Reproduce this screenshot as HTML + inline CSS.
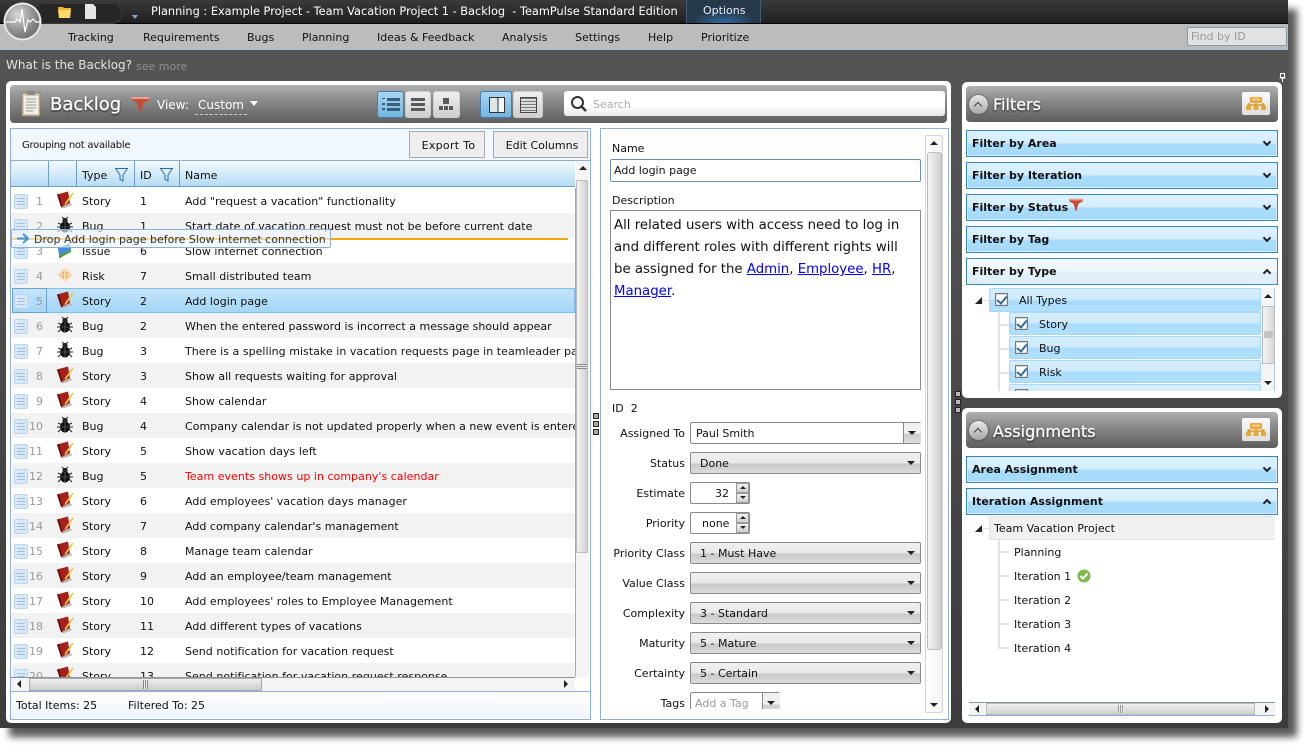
<!DOCTYPE html>
<html><head><meta charset="utf-8"><style>
html,body{margin:0;padding:0;background:#fff;width:1304px;height:745px;overflow:hidden}
body{font:11px "DejaVu Sans",sans-serif;color:#111;position:relative}
.a,.r>*{position:absolute}
.t{white-space:pre;line-height:14px;margin-top:1px}
.r{position:absolute;left:0;width:563px;height:25px;line-height:27px;white-space:pre}
.r:nth-child(even){background:#f2f2f2}
.r .h{left:2px;top:6px;width:12px;height:13px;background:#d8e8f7;border:1px solid #bcd5ec;border-radius:2px;line-height:0}
.r .h:before{content:"";position:absolute;left:2px;top:3px;width:8px;height:1px;background:#9dbfe0;box-shadow:0 3px 0 #9dbfe0,0 6px 0 #9dbfe0}
.r .n{right:532px;color:#999;font-size:11px}
.r svg{left:44px;top:3px}
.r .k{left:70px}.r .i{left:128px}.r .m{left:173px;letter-spacing:.03px}
.ac{position:absolute;left:966px;border:1px solid #3a86b8;padding:0 0 0 5px;width:305px;height:25px;line-height:26px;font-weight:bold;font-size:11px;background:linear-gradient(#daf0fe 0,#d4edfd 48%,#a9dcfb 52%,#a6dafa 100%);box-shadow:inset 0 0 0 1px #d6eefc}
.ac i{position:absolute;right:7px;top:8px;width:4px;height:4px;border:solid #222;border-width:0 2px 2px 0;transform:rotate(45deg)}
.ac i.u{top:11px;transform:rotate(225deg)}
.lb{position:absolute;right:619px;white-space:pre;line-height:14px;margin-top:1px}
.dd{position:absolute;left:690px;width:229px;height:20px;border:1px solid #8a8a8a;border-radius:2px;line-height:20px;background:linear-gradient(#f0f0f0 0,#e8e8e8 50%,#c9c9c9 55%,#dcdcdc 100%)}
.dd span{position:absolute;left:9px;top:1px;white-space:pre}
.dd:after,.ar:after{content:"";position:absolute;right:5px;top:8px;border:solid transparent;border-width:4px 4px 0;border-top-color:#222}
.in{position:absolute;background:#fff;border:1px solid #8a8a8a;border-radius:2px;box-sizing:border-box}
.sp{position:absolute;width:13px;height:10px;background:linear-gradient(#f2f2f2,#cfcfcf);border:1px solid #9a9a9a;box-sizing:border-box}
.sp:after{content:"";position:absolute;left:3px;top:2px;border:solid transparent;border-width:0 3px 3px;border-bottom-color:#222}
.sp.d:after{border-width:3px 3px 0;border-bottom-color:transparent;border-top-color:#222}
.hd{position:absolute;background:linear-gradient(#b0b0b0 0,#8a8a8a 40%,#5e5e5e 100%);border-radius:4px}
.ttl{position:absolute;color:#fff;text-shadow:0 0 1px #fff,0 1px 2px #000;white-space:pre;margin-top:1px}
.cb{position:absolute;width:11px;height:11px;border:1px solid #777;background:#fff;box-shadow:inset 0 0 0 1px #ddd;line-height:0}
.cb:after{content:"";position:absolute;left:3px;top:0;width:4px;height:8px;border:solid #2b6a9e;border-width:0 2px 2px 0;transform:rotate(40deg)}
.ti{position:absolute;height:23px;background:linear-gradient(#d6eefc 0,#cfeafc 45%,#a9dcfb 55%,#b2e0fb 100%);border:1px solid #a4daf8;box-sizing:border-box;border-radius:2px}
.tl{position:absolute;background:#e2e2e2}
.btn{position:absolute;top:91px;height:27px;box-sizing:border-box;border:1px solid #ccc;border-radius:3px;background:linear-gradient(#f0f0f0,#cfcfcf)}
.btn.on{background:linear-gradient(#a8d5f2,#73b5e0);border-color:#3f7fae}
.bar{position:absolute;background:#5a5a5a}
.grip{position:absolute;width:6px;height:6px;box-sizing:border-box;border:1px solid #222;background:#aaa}
.tb{position:absolute;top:131px;height:27px;box-sizing:border-box;border:1px solid #aaa;background:#eee;line-height:27px;text-align:center}
.chev{position:absolute;width:19px;height:19px;border-radius:50%;background:linear-gradient(#e8e8e8,#a8a8a8);box-shadow:0 0 2px #333}
.chev:after{content:"";position:absolute;left:6px;top:8px;width:5px;height:5px;border:solid #444;border-width:1px 0 0 1px;transform:rotate(45deg)}
.org{position:absolute;width:28px;height:23px;background:linear-gradient(#fafafa,#dedede);border-radius:2px;box-shadow:0 0 1px #999}
</style></head><body>
<svg width="0" height="0" style="position:absolute"><defs>
<symbol id="story" viewBox="0 0 18 18"><path d="M5 15.500l9-3.500 2.500 2-9.500 3.500z" fill="#b9b9b9"/><path d="M1 3.500L12 .5l2 11.500-9 4z" fill="#a8201c"/><path d="M1 3.500l4 12.500 1.500.5L3 3z" fill="#5e100e"/><path d="M16.500 1.500l1 1L10.500 13l-1.800 1 .2-2z" fill="#f0c23a"/></symbol>
<symbol id="bug" viewBox="0 0 18 18"><ellipse cx="9" cy="11" rx="5" ry="5.500" fill="#111"/><circle cx="9" cy="4.500" r="2.600" fill="#222"/><path d="M2 7l4 2M16 7l-4 2M1 11h4M17 11h-4M2 16l3-3M16 16l-3-3M6 1l2 2M12 1l-2 2" stroke="#222" stroke-width="1" fill="none"/><path d="M9 6v10M5 11h8" stroke="#777" stroke-width=".6"/></symbol>
<symbol id="risk" viewBox="0 0 18 18"><path d="M9 1l8 8-8 8-8-8z" fill="#f8e2c4"/><path d="M9 3.500l5.500 5.500L9 14.500 3.500 9z" fill="#e8b268"/><path d="M8.500 4v10h1V4z" fill="#fff"/><path d="M4.500 9l2.500-2v4zM13.500 9L11 7v4z" fill="#f8e2c4"/></symbol>
<symbol id="issue" viewBox="0 0 18 18"><path d="M2 7l12-5 1 7-12 5z" fill="#3f8fe0"/><path d="M3 14l12-5 0 2-11 6z" fill="#5b9a3c"/><path d="M3 14l1 3-1 0z" fill="#b5231f"/></symbol>
</defs></svg>

<!-- window -->
<div class="a" style="left:0;top:0;width:1288px;height:728px;background:linear-gradient(#565656 0,#505050 30%,#3c3c3c 100%);box-shadow:9px 9px 7px rgba(0,0,0,.65)"></div>
<div class="a" style="left:0;top:0;width:1288px;height:23px;background:linear-gradient(#3a3a3a,#1f1f1f)"></div>
<div class="a" style="left:0;top:23px;width:1288px;height:1px;background:#000"></div>
<div class="a" style="left:0;top:24px;width:1288px;height:25px;background:#bcbcbc"></div>
<div class="a" style="left:0;top:49px;width:1288px;height:1px;background:#9cc0e8"></div>

<div class="a" style="left:34px;top:3px;width:86px;height:19px;border:1px solid #3a3a3a;border-radius:10px;background:#262626"></div>
<svg class="a" style="left:3px;top:2px" width="40" height="40" viewBox="0 0 40 40"><defs><radialGradient id="lg" cx=".35" cy=".3" r=".8"><stop offset="0" stop-color="#d8d8d8"/><stop offset=".6" stop-color="#8f8f8f"/><stop offset="1" stop-color="#6a6a6a"/></radialGradient></defs><circle cx="19.500" cy="19.500" r="19" fill="#e8e8e8"/><circle cx="19.500" cy="19.500" r="17" fill="url(#lg)"/><path d="M3 20h9l2-3 3 3 2-13 3 23 3-12 2 2 3-3 3 3h5" stroke="#fff" stroke-width="1.200" fill="none"/></svg>
<svg class="a" style="left:57px;top:4px" width="15" height="15" viewBox="0 0 15 15"><path d="M1 3h5l1 1h7l-1 10H2z" fill="#f1b72f"/><path d="M1 6h13l-1 8H2z" fill="#fbd869"/></svg>
<svg class="a" style="left:85px;top:4px" width="12" height="15" viewBox="0 0 12 15"><path d="M0 0h8l3 3v12H0z" fill="#e6e6e6"/></svg>
<svg class="a" style="left:132px;top:15px" width="6" height="4" viewBox="0 0 6 4"><path d="M0 0h6L3 4z" fill="#8aa4d8"/></svg>

<div class="a t" style="left:151px;top:3px;color:#fff;font-size:11.33px">Planning : Example Project - Team Vacation Project 1 - Backlog  - TeamPulse Standard Edition</div>
<div class="a" style="left:686px;top:0;width:75px;height:23px;box-sizing:border-box;border:solid #3f5f7a;border-width:0 1px;background:radial-gradient(ellipse 40px 16px at 50% 100%,#2f6a9e,#25394b 80%)"></div>
<div class="a t" style="left:703px;top:3px;color:#e8eef4">Options</div>

<div class="a t" style="left:68px;top:30px">Tracking</div>
<div class="a t" style="left:143px;top:30px">Requirements</div>
<div class="a t" style="left:247px;top:30px">Bugs</div>
<div class="a t" style="left:302px;top:30px">Planning</div>
<div class="a t" style="left:377px;top:30px">Ideas &amp; Feedback</div>
<div class="a t" style="left:502px;top:30px">Analysis</div>
<div class="a t" style="left:575px;top:30px">Settings</div>
<div class="a t" style="left:648px;top:30px">Help</div>
<div class="a t" style="left:701px;top:30px">Prioritize</div>
<div class="a" style="left:1187px;top:27px;width:98px;height:17px;border:1px solid #8c9aa8;border-radius:2px;background:#e2e2e2"></div>
<div class="a t" style="left:1191px;top:29px;color:#9a9a9a;font-size:11px">Find by ID</div>

<div class="a t" style="left:6px;top:57px;font-size:12px;color:#e4e4e4">What is the Backlog?</div>
<div class="a t" style="left:136px;top:59px;color:#8f8f8f">see more</div>

<!-- backlog panel -->
<div class="a" style="left:6px;top:81px;width:945px;height:642px;background:#fff;border-radius:5px"></div>
<div class="hd" style="left:10px;top:85px;width:937px;height:38px"></div>
<svg class="a" style="left:21px;top:90px" width="20" height="27" viewBox="0 0 20 27"><rect x="1" y="3" width="18" height="23" rx="1" fill="#d8cdb8" stroke="#8a7f6a"/><rect x="3" y="6" width="14" height="18" fill="#efefe8"/><rect x="6" y="1" width="8" height="4" fill="#888"/><path d="M5 9h10M5 12h10M5 15h10M5 18h10M5 21h7" stroke="#999"/></svg>
<div class="ttl" style="left:50px;top:92px;font-size:18px;line-height:24px">Backlog</div>
<svg class="a" style="left:132px;top:96px" width="17" height="16" viewBox="0 0 17 16"><path d="M0 1h17v3l-5.500 3L9 16 8 16 5.500 7 0 4z" fill="#c94a35"/><path d="M0 1h17v2H0z" fill="#e8a090"/></svg>
<div class="a t" style="left:157px;top:97px;font-size:12px;color:#fff">View:</div>
<div class="a t" style="left:198px;top:97px;font-size:12px;color:#fff">Custom</div>
<div class="a" style="left:195px;top:114px;width:52px;border-top:1px dashed #ccc"></div>
<div class="a" style="left:250px;top:101px;border:solid transparent;border-width:5px 4px 0;border-top-color:#fff"></div>

<div class="btn on" style="left:377px;width:27px"></div>
<div class="btn" style="left:405px;width:26px"></div>
<div class="btn" style="left:433px;width:27px"></div>
<div class="btn on" style="left:480px;width:32px"></div>
<div class="btn" style="left:513px;width:30px"></div>
<div class="bar" style="left:387px;top:98px;width:13px;height:3px;background:#3a5f7a"></div><div class="bar" style="left:387px;top:103px;width:13px;height:3px;background:#3a5f7a"></div><div class="bar" style="left:387px;top:108px;width:13px;height:3px;background:#3a5f7a"></div>
<div class="bar" style="left:382px;top:98px;width:3px;height:1px;background:#3a5f7a"></div><div class="bar" style="left:382px;top:103px;width:3px;height:2px;background:#3a5f7a"></div><div class="bar" style="left:382px;top:108px;width:3px;height:2px;background:#3a5f7a"></div>
<div class="bar" style="left:411px;top:98px;width:14px;height:3px"></div><div class="bar" style="left:411px;top:103px;width:14px;height:3px"></div><div class="bar" style="left:411px;top:108px;width:14px;height:3px"></div>
<div class="bar" style="left:443px;top:98px;width:6px;height:6px"></div><div class="bar" style="left:439px;top:106px;width:4px;height:4px"></div><div class="bar" style="left:444px;top:106px;width:4px;height:4px"></div><div class="bar" style="left:449px;top:106px;width:4px;height:4px"></div>
<div class="a" style="left:489px;top:97px;width:14px;height:14px;border:1px solid #333;background:linear-gradient(90deg,#dfe6ea 55%,#333 55%,#333 60%,#f4f8fb 60%)"></div>
<div class="a" style="left:520px;top:97px;width:15px;height:14px;border:1px solid #444;background:repeating-linear-gradient(#777 0,#777 1px,#ddd 1px,#ddd 3px)"></div>

<div class="a" style="left:564px;top:91px;width:381px;height:25px;border-radius:3px;background:linear-gradient(#fff 60%,#e9e9e9)"></div>
<svg class="a" style="left:570px;top:95px" width="18" height="18" viewBox="0 0 18 18"><circle cx="7.500" cy="7.500" r="5.500" stroke="#333" stroke-width="2" fill="none"/><path d="M11.500 11.500L16 16" stroke="#333" stroke-width="2.500"/></svg>
<div class="a t" style="left:593px;top:97px;color:#aaa">Search</div>

<!-- grid -->
<div class="a" style="left:10px;top:128px;width:579px;height:590px;border:1px solid #8eb0d6;background:#fff"></div>
<div class="a" style="left:11px;top:129px;width:579px;height:31px;background:#f0f7fe"></div>
<div class="a" style="left:11px;top:160px;width:579px;height:1px;background:#8eb0d6"></div>
<div class="a t" style="left:22px;top:138px;font-size:10px;letter-spacing:-.25px">Grouping not available</div>
<div class="tb" style="left:409px;width:76px;letter-spacing:.3px;padding-left:3px">Export To</div>
<div class="tb" style="left:493px;width:95px;padding-left:3px">Edit Columns</div>

<div class="a" style="left:11px;top:161px;width:564px;height:26px;background:linear-gradient(#f2f9fe,#d4ebfa 50%,#b5dcf6);border-bottom:1px solid #6f9fc8;box-sizing:border-box"></div>
<div class="a" style="left:48px;top:161px;width:1px;height:26px;background:#6f9fc8"></div>
<div class="a" style="left:76px;top:161px;width:1px;height:26px;background:#6f9fc8"></div>
<div class="a" style="left:134px;top:161px;width:1px;height:26px;background:#6f9fc8"></div>
<div class="a" style="left:179px;top:161px;width:1px;height:26px;background:#6f9fc8"></div>
<div class="a t" style="left:82px;top:168px">Type</div>
<div class="a t" style="left:140px;top:168px">ID</div>
<div class="a t" style="left:185px;top:168px">Name</div>
<svg class="a" style="left:115px;top:168px" width="13" height="14" viewBox="0 0 13 14"><path d="M.5.500h12L8 7v6l-3-1.500V7z" fill="none" stroke="#2f6d99"/></svg>
<svg class="a" style="left:160px;top:168px" width="13" height="14" viewBox="0 0 13 14"><path d="M.5.500h12L8 7v6l-3-1.500V7z" fill="none" stroke="#2f6d99"/></svg>

<div class="a" style="left:12px;top:188px;width:563px;height:489px;overflow:hidden;border-right:1px solid #8eb0d6">
<div class="r" style="top:0"><b class="h"></b><span class="n">1</span><svg width="18" height="18"><use href="#story"/></svg><span class="k">Story</span><span class="i">1</span><span class="m">Add "request a vacation" functionality</span></div>
<div class="r" style="top:25px"><b class="h"></b><span class="n">2</span><svg width="18" height="18"><use href="#bug"/></svg><span class="k">Bug</span><span class="i">1</span><span class="m">Start date of vacation request must not be before current date</span></div>
<div class="r" style="top:50px"><b class="h"></b><span class="n">3</span><svg width="18" height="18"><use href="#issue"/></svg><span class="k">Issue</span><span class="i">6</span><span class="m">Slow internet connection</span></div>
<div class="r" style="top:75px"><b class="h"></b><span class="n">4</span><svg width="18" height="18"><use href="#risk"/></svg><span class="k">Risk</span><span class="i">7</span><span class="m">Small distributed team</span></div>
<div class="r" style="top:100px;background:linear-gradient(#c5e6fb,#b4ddf8 50%,#a3d6f6);box-shadow:inset 0 0 0 1px #7fc0ea"><b class="h"></b><span class="n">5</span><svg width="18" height="18"><use href="#story"/></svg><span class="k">Story</span><span class="i">2</span><span class="m">Add login page</span><b style="left:0;top:0;width:33px;height:23px;border:1px solid #6f9fd0"></b></div>
<div class="r" style="top:125px"><b class="h"></b><span class="n">6</span><svg width="18" height="18"><use href="#bug"/></svg><span class="k">Bug</span><span class="i">2</span><span class="m">When the entered password is incorrect a message should appear</span></div>
<div class="r" style="top:150px"><b class="h"></b><span class="n">7</span><svg width="18" height="18"><use href="#bug"/></svg><span class="k">Bug</span><span class="i">3</span><span class="m">There is a spelling mistake in vacation requests page in teamleader page</span></div>
<div class="r" style="top:175px"><b class="h"></b><span class="n">8</span><svg width="18" height="18"><use href="#story"/></svg><span class="k">Story</span><span class="i">3</span><span class="m">Show all requests waiting for approval</span></div>
<div class="r" style="top:200px"><b class="h"></b><span class="n">9</span><svg width="18" height="18"><use href="#story"/></svg><span class="k">Story</span><span class="i">4</span><span class="m">Show calendar</span></div>
<div class="r" style="top:225px"><b class="h"></b><span class="n">10</span><svg width="18" height="18"><use href="#bug"/></svg><span class="k">Bug</span><span class="i">4</span><span class="m">Company calendar is not updated properly when a new event is entered</span></div>
<div class="r" style="top:250px"><b class="h"></b><span class="n">11</span><svg width="18" height="18"><use href="#story"/></svg><span class="k">Story</span><span class="i">5</span><span class="m">Show vacation days left</span></div>
<div class="r" style="top:275px"><b class="h"></b><span class="n">12</span><svg width="18" height="18"><use href="#bug"/></svg><span class="k">Bug</span><span class="i">5</span><span class="m" style="color:#f00">Team events shows up in company's calendar</span></div>
<div class="r" style="top:300px"><b class="h"></b><span class="n">13</span><svg width="18" height="18"><use href="#story"/></svg><span class="k">Story</span><span class="i">6</span><span class="m">Add employees' vacation days manager</span></div>
<div class="r" style="top:325px"><b class="h"></b><span class="n">14</span><svg width="18" height="18"><use href="#story"/></svg><span class="k">Story</span><span class="i">7</span><span class="m">Add company calendar's management</span></div>
<div class="r" style="top:350px"><b class="h"></b><span class="n">15</span><svg width="18" height="18"><use href="#story"/></svg><span class="k">Story</span><span class="i">8</span><span class="m">Manage team calendar</span></div>
<div class="r" style="top:375px"><b class="h"></b><span class="n">16</span><svg width="18" height="18"><use href="#story"/></svg><span class="k">Story</span><span class="i">9</span><span class="m">Add an employee/team management</span></div>
<div class="r" style="top:400px"><b class="h"></b><span class="n">17</span><svg width="18" height="18"><use href="#story"/></svg><span class="k">Story</span><span class="i">10</span><span class="m">Add employees' roles to Employee Management</span></div>
<div class="r" style="top:425px"><b class="h"></b><span class="n">18</span><svg width="18" height="18"><use href="#story"/></svg><span class="k">Story</span><span class="i">11</span><span class="m">Add different types of vacations</span></div>
<div class="r" style="top:450px"><b class="h"></b><span class="n">19</span><svg width="18" height="18"><use href="#story"/></svg><span class="k">Story</span><span class="i">12</span><span class="m">Send notification for vacation request</span></div>
<div class="r" style="top:475px"><b class="h"></b><span class="n">20</span><svg width="18" height="18"><use href="#story"/></svg><span class="k">Story</span><span class="i">13</span><span class="m">Send notification for vacation request response</span></div>
</div>

<!-- grid scrollbars -->
<div class="a" style="left:576px;top:161px;width:13px;height:516px;background:#f4f4f4"></div>
<div class="a" style="left:579px;top:166px;border:solid transparent;border-width:0 4px 4px;border-bottom-color:#222"></div>
<div class="a" style="left:576px;top:180px;width:12px;height:373px;border:1px solid #bbb;box-sizing:border-box;border-radius:2px;background:linear-gradient(90deg,#f4f4f4,#cfcfcf)"></div>
<div class="a" style="left:577px;top:364px;width:10px;height:5px;background:repeating-linear-gradient(#888 0,#888 1px,#eee 1px,#eee 2px)"></div>
<div class="a" style="left:11px;top:677px;width:564px;height:14px;background:#f4f4f4;border-top:1px solid #8a93a0;box-sizing:border-box"></div>
<div class="a" style="left:17px;top:680px;border:solid transparent;border-width:4px 4px 4px 0;border-right-color:#222"></div>
<div class="a" style="left:564px;top:680px;border:solid transparent;border-width:4px 0 4px 4px;border-left-color:#222"></div>
<div class="a" style="left:29px;top:678px;width:233px;height:13px;box-sizing:border-box;border:1px solid #aaa;background:linear-gradient(#eee,#ccc)"></div>
<div class="a" style="left:143px;top:680px;width:5px;height:9px;background:repeating-linear-gradient(90deg,#888 0,#888 1px,#eee 1px,#eee 2px)"></div>
<div class="a" style="left:11px;top:691px;width:579px;height:1px;background:#8eb0d6"></div>
<div class="a" style="left:11px;top:692px;width:579px;height:26px;background:linear-gradient(#fff,#edf5fc)"></div>
<div class="a t" style="left:16px;top:698px">Total Items: 25</div>
<div class="a t" style="left:128px;top:698px">Filtered To: 25</div>

<!-- drag -->
<div class="a" style="left:12px;top:238px;width:556px;height:2px;background:#f5a800"></div>
<div class="a" style="left:11px;top:229px;width:320px;height:19px;box-sizing:border-box;border:1px solid #8eb0d6;border-radius:2px;background:rgba(240,246,252,.62)"></div>
<svg class="a" style="left:17px;top:233px" width="12" height="11" viewBox="0 0 12 11"><path d="M0 5.500h10M6 1l5 4.500L6 10" stroke="#3f95d8" stroke-width="2" fill="none"/></svg>
<div class="a t" style="left:34px;top:232px;color:#333">Drop Add login page before Slow internet connection</div>

<!-- splitter -->
<div class="grip" style="left:593px;top:413px"></div><div class="grip" style="left:593px;top:421px"></div><div class="grip" style="left:593px;top:429px"></div>
<div class="grip" style="left:955px;top:391px;background:#bbb"></div><div class="grip" style="left:955px;top:399px;background:#bbb"></div><div class="grip" style="left:955px;top:407px;background:#bbb"></div>

<!-- details -->
<div class="a" style="left:600px;top:128px;width:347px;height:590px;border:1px solid #8eb0d6;background:#fff"></div>
<div class="a t" style="left:612px;top:141px">Name</div>
<div class="in" style="left:610px;top:159px;width:311px;height:23px;border-color:#6f8fae"></div>
<div class="a t" style="left:614px;top:163px">Add login page</div>
<div class="a t" style="left:612px;top:193px">Description</div>
<div class="in" style="left:610px;top:210px;width:311px;height:180px;border-radius:0"></div>
<div class="a" style="left:614px;top:215px;width:305px;font-size:13.3px;line-height:22px;white-space:pre">All related users with access need to log in
and different roles with different rights will
be assigned for the <u style="color:#00e">Admin</u>, <u style="color:#00e">Employee</u>, <u style="color:#00e">HR</u>,
<u style="color:#00e">Manager</u>.</div>
<div class="a t" style="left:612px;top:401px">ID  2</div>

<div class="lb" style="top:426px">Assigned To</div>
<div class="in" style="left:690px;top:422px;width:231px;height:22px"></div>
<div class="a t" style="left:696px;top:426px">Paul Smith</div>
<div class="a ar" style="left:903px;top:423px;width:17px;height:20px;border-left:1px solid #8a8a8a;background:linear-gradient(#f0f0f0 50%,#cfcfcf 55%,#ddd)"></div>

<div class="lb" style="top:456px">Status</div><div class="dd" style="top:452px"><span>Done</span></div>
<div class="lb" style="top:486px">Estimate</div>
<div class="in" style="left:690px;top:482px;width:60px;height:22px"></div><div class="a t" style="left:715px;top:486px">32</div>
<div class="sp" style="left:736px;top:483px"></div><div class="sp d" style="left:736px;top:493px"></div>
<div class="lb" style="top:516px">Priority</div>
<div class="in" style="left:690px;top:512px;width:60px;height:22px"></div><div class="a t" style="left:702px;top:516px">none</div>
<div class="sp" style="left:736px;top:513px"></div><div class="sp d" style="left:736px;top:523px"></div>
<div class="lb" style="top:546px">Priority Class</div><div class="dd" style="top:542px"><span>1 - Must Have</span></div>
<div class="lb" style="top:576px">Value Class</div><div class="dd" style="top:572px"></div>
<div class="lb" style="top:606px">Complexity</div><div class="dd" style="top:602px"><span>3 - Standard</span></div>
<div class="lb" style="top:636px">Maturity</div><div class="dd" style="top:632px"><span>5 - Mature</span></div>
<div class="lb" style="top:666px">Certainty</div><div class="dd" style="top:662px"><span>5 - Certain</span></div>
<div class="lb" style="top:696px">Tags</div>
<div class="a" style="left:690px;top:692px;width:90px;height:17px;overflow:hidden"><div class="in" style="left:0;top:0;width:90px;height:24px"></div>
<div class="a t" style="left:5px;top:4px;color:#999">Add a Tag</div>
<div class="a ar" style="left:72px;top:1px;width:17px;height:22px;border-left:1px solid #8a8a8a;background:linear-gradient(#f0f0f0 50%,#cfcfcf 55%,#ddd)"></div></div>

<div class="a" style="left:925px;top:135px;width:18px;height:578px;box-sizing:border-box;border:1px solid #d4d4d4;border-radius:2px;background:linear-gradient(90deg,#fff,#f4f4f4)"></div>
<div class="a" style="left:930px;top:141px;border:solid transparent;border-width:0 4px 4px;border-bottom-color:#222"></div>
<div class="a" style="left:930px;top:703px;border:solid transparent;border-width:4px 4px 0;border-top-color:#222"></div>
<div class="a" style="left:927px;top:152px;width:15px;height:498px;box-sizing:border-box;border:1px solid #bbb;border-radius:3px;background:linear-gradient(90deg,#f4f4f4,#cfcfcf)"></div>

<!-- filters -->
<div class="a" style="left:962px;top:82px;width:320px;height:316px;background:#fff;border-radius:5px"></div>
<div class="hd" style="left:966px;top:86px;width:312px;height:36px"></div>
<div class="chev" style="left:969px;top:95px"></div>
<div class="ttl" style="left:993px;top:93px;font-size:16px;line-height:22px">Filters</div>
<div class="org" style="left:1242px;top:92px"></div>
<svg class="a" style="left:1246px;top:97px" width="20" height="13" viewBox="0 0 20 13"><rect x="4" y="0" width="12" height="6" rx="1" fill="#e6a83a"/><rect x="6" y="1.500" width="8" height="2" fill="#f3d08a"/><path d="M1 8h18M3 6v5M10 6v5M17 6v5" stroke="#d9982c" stroke-width="1.500" fill="none"/><rect x="0" y="9" width="5" height="4" fill="#e6a83a"/><rect x="7.500" y="9" width="5" height="4" fill="#e6a83a"/><rect x="15" y="9" width="5" height="4" fill="#e6a83a"/></svg>
<div class="ac" style="top:130px">Filter by Area<i></i></div>
<div class="ac" style="top:162px">Filter by Iteration<i></i></div>
<div class="ac" style="top:194px">Filter by Status<i></i></div>
<svg class="a" style="left:1069px;top:198px" width="14" height="13" viewBox="0 0 17 16"><path d="M0 1h17v3l-5.500 3L9 16 8 16 5.500 7 0 4z" fill="#c94a35"/><path d="M0 1h17v2H0z" fill="#e8a090"/></svg>
<div class="ac" style="top:226px">Filter by Tag<i></i></div>
<div class="ac" style="top:258px;background:linear-gradient(#f2f9fd 0,#eef7fc 48%,#e2f0f9 52%,#deeef8 100%);box-shadow:none">Filter by Type<i class="u"></i></div>

<div class="a" style="left:973px;top:288px;width:302px;height:103px;overflow:hidden">
<div class="tl" style="left:25px;top:24px;width:2px;height:79px"></div>
<div class="tl" style="left:9px;top:12px;width:7px;height:1px"></div>
<div class="tl" style="left:25px;top:36px;width:11px;height:2px"></div><div class="tl" style="left:25px;top:60px;width:11px;height:2px"></div><div class="tl" style="left:25px;top:84px;width:11px;height:2px"></div>
<div class="a" style="left:2px;top:9px;border:solid transparent;border-width:0 0 7px 7px;border-bottom-color:#222"></div>
<div class="ti" style="left:16px;top:0;width:272px;height:24px"></div>
<div class="ti" style="left:36px;top:24px;width:252px"></div>
<div class="ti" style="left:36px;top:48px;width:252px"></div>
<div class="ti" style="left:36px;top:72px;width:252px"></div>
<div class="ti" style="left:36px;top:96px;width:252px"></div>
<div class="cb" style="left:22px;top:5px"></div><div class="a t" style="left:46px;top:5px">All Types</div>
<div class="cb" style="left:42px;top:29px"></div><div class="a t" style="left:66px;top:29px">Story</div>
<div class="cb" style="left:42px;top:53px"></div><div class="a t" style="left:66px;top:53px">Bug</div>
<div class="cb" style="left:42px;top:77px"></div><div class="a t" style="left:66px;top:77px">Risk</div>
<div class="cb" style="left:42px;top:101px"></div>
<div class="a" style="left:288px;top:0;width:14px;height:103px;background:#f4f4f4;border-right:1px solid #a8c8e8;box-sizing:border-box"></div>
<div class="a" style="left:291px;top:6px;border:solid transparent;border-width:0 4px 4px;border-bottom-color:#222"></div>
<div class="a" style="left:291px;top:93px;border:solid transparent;border-width:4px 4px 0;border-top-color:#222"></div>
<div class="a" style="left:289px;top:18px;width:13px;height:58px;box-sizing:border-box;border:1px solid #bbb;background:linear-gradient(90deg,#f4f4f4,#d8d8d8)"></div>
<div class="a" style="left:291px;top:43px;width:9px;height:7px;background:#c4c4c4"></div>
</div>

<!-- assignments -->
<div class="a" style="left:962px;top:408px;width:320px;height:315px;background:#fff;border-radius:5px"></div>
<div class="hd" style="left:966px;top:412px;width:312px;height:36px"></div>
<div class="chev" style="left:969px;top:421px"></div>
<div class="ttl" style="left:993px;top:420px;font-size:16px;line-height:22px">Assignments</div>
<div class="org" style="left:1242px;top:418px"></div>
<svg class="a" style="left:1246px;top:423px" width="20" height="13" viewBox="0 0 20 13"><rect x="4" y="0" width="12" height="6" rx="1" fill="#e6a83a"/><rect x="6" y="1.500" width="8" height="2" fill="#f3d08a"/><path d="M1 8h18M3 6v5M10 6v5M17 6v5" stroke="#d9982c" stroke-width="1.500" fill="none"/><rect x="0" y="9" width="5" height="4" fill="#e6a83a"/><rect x="7.500" y="9" width="5" height="4" fill="#e6a83a"/><rect x="15" y="9" width="5" height="4" fill="#e6a83a"/></svg>
<div class="ac" style="top:456px">Area Assignment<i></i></div>
<div class="ac" style="top:488px">Iteration Assignment<i class="u"></i></div>

<div class="tl" style="left:998px;top:540px;width:2px;height:109px"></div>
<div class="tl" style="left:982px;top:528px;width:7px;height:1px"></div>
<div class="tl" style="left:998px;top:551px;width:11px;height:2px"></div>
<div class="tl" style="left:998px;top:575px;width:11px;height:2px"></div>
<div class="tl" style="left:998px;top:599px;width:11px;height:2px"></div>
<div class="tl" style="left:998px;top:623px;width:11px;height:2px"></div>
<div class="tl" style="left:998px;top:647px;width:11px;height:2px"></div>
<div class="a" style="left:975px;top:525px;border:solid transparent;border-width:0 0 7px 7px;border-bottom-color:#222"></div>
<div class="a" style="left:989px;top:516px;width:286px;height:24px;box-sizing:border-box;border:1px solid #e2e2e2;border-right:0;border-radius:2px;background:#f1f0f0"></div>
<div class="a t" style="left:994px;top:521px">Team Vacation Project</div>
<div class="a t" style="left:1014px;top:545px">Planning</div>
<div class="a t" style="left:1014px;top:569px">Iteration 1</div>
<svg class="a" style="left:1077px;top:569px" width="14" height="14" viewBox="0 0 14 14"><circle cx="7" cy="7" r="6.500" fill="#7cb84a"/><path d="M3.500 7l2.500 2.500 4.500-5" stroke="#fff" stroke-width="2" fill="none"/></svg>
<div class="a t" style="left:1014px;top:593px">Iteration 2</div>
<div class="a t" style="left:1014px;top:617px">Iteration 3</div>
<div class="a t" style="left:1014px;top:641px">Iteration 4</div>

<div class="a" style="left:969px;top:702px;width:306px;height:14px;box-sizing:border-box;background:#f4f4f4;border-top:1px solid #8a93a0;border-bottom:1px solid #8eb0d6"></div>
<div class="a" style="left:975px;top:705px;border:solid transparent;border-width:4px 4px 4px 0;border-right-color:#222"></div>
<div class="a" style="left:1265px;top:705px;border:solid transparent;border-width:4px 0 4px 4px;border-left-color:#222"></div>
<div class="a" style="left:986px;top:703px;width:269px;height:12px;box-sizing:border-box;border:1px solid #bbb;background:linear-gradient(#eee,#d2d2d2)"></div>
<div class="a" style="left:1118px;top:705px;width:6px;height:8px;background:repeating-linear-gradient(90deg,#999 0,#999 1px,#eee 1px,#eee 2px)"></div>

<!-- pin -->
<svg class="a" style="left:1279px;top:73px" width="7" height="9" viewBox="0 0 7 9"><path d="M1.500.500h4v4h-4zM.5 5h6M3.500 5v4" stroke="#fff" fill="none"/></svg>
</body></html>
